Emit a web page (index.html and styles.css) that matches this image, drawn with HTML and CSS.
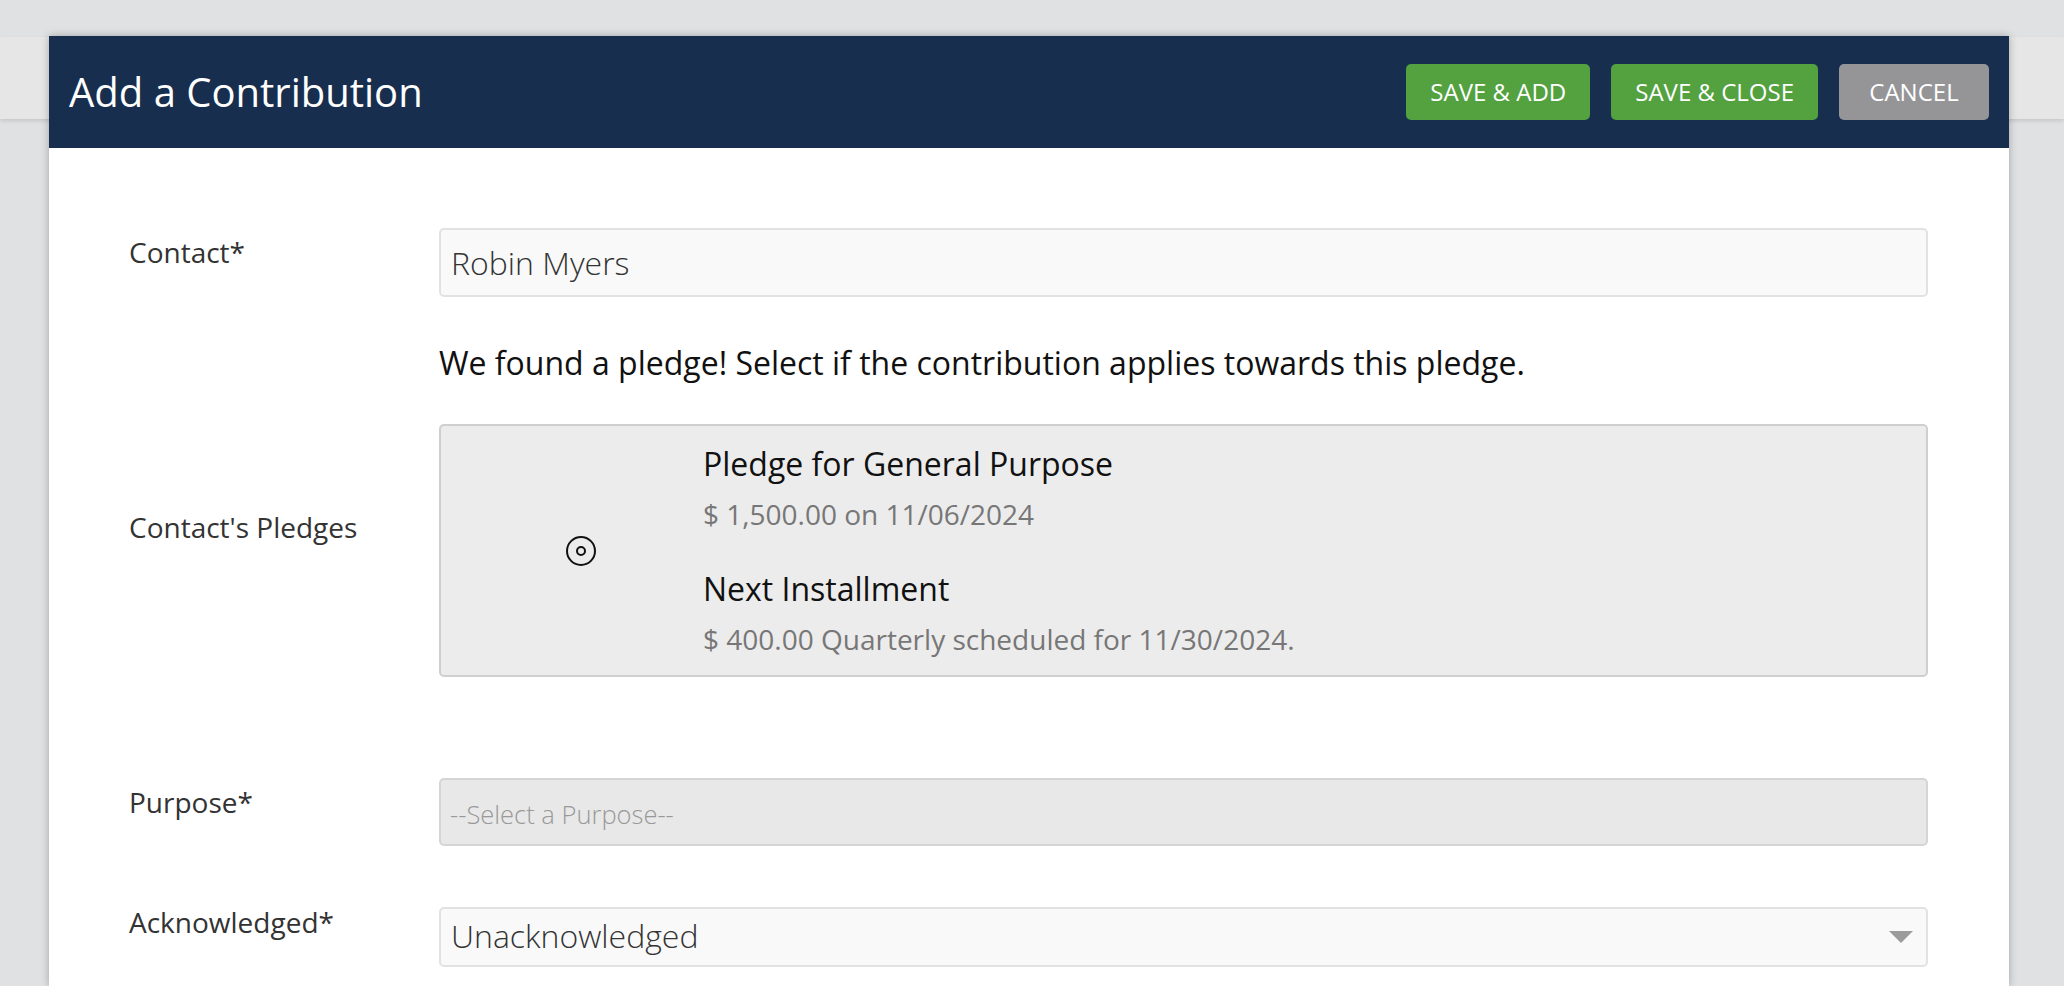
FILE: index.html
```html
<!DOCTYPE html>
<html lang="en">
<head>
<meta charset="utf-8">
<title>Add a Contribution</title>
<link rel="stylesheet" href="styles.css">
</head>
<body>
<div class="backdrop">
  <div class="backdrop-bar"></div>
</div>
<div class="modal">
  <header class="modal-header">
    <h1 class="modal-title">Add a Contribution</h1>
    <div class="actions">
      <button class="btn btn-green">SAVE &amp; ADD</button>
      <button class="btn btn-green">SAVE &amp; CLOSE</button>
      <button class="btn btn-gray">CANCEL</button>
    </div>
  </header>
  <div class="modal-body">
    <div class="form">
      <div class="row row-contact">
        <label class="label">Contact*</label>
        <div class="field field-input">Robin Myers</div>
      </div>
      <div class="row row-notice">
        <div></div>
        <p class="notice">We found a pledge! Select if the contribution applies towards this pledge.</p>
      </div>
      <div class="row row-pledges">
        <label class="label label-pledges">Contact's Pledges</label>
        <div class="pledge-box">
          <div class="radio-cell">
            <svg class="radio" width="30" height="30" viewBox="0 0 30 30"><circle cx="15" cy="15" r="14" fill="none" stroke="#111" stroke-width="2"/><circle cx="15" cy="15" r="4" fill="none" stroke="#111" stroke-width="2"/></svg>
          </div>
          <div class="pledge-info">
            <div class="pledge-title">Pledge for General Purpose</div>
            <div class="pledge-sub">$ 1,500.00 on 11/06/2024</div>
            <div class="pledge-title pledge-title-next">Next Installment</div>
            <div class="pledge-sub">$ 400.00 Quarterly scheduled for 11/30/2024.</div>
          </div>
        </div>
      </div>
      <div class="row row-purpose">
        <label class="label">Purpose*</label>
        <div class="field field-disabled">--Select a Purpose--</div>
      </div>
      <div class="row row-ack">
        <label class="label">Acknowledged*</label>
        <div class="field field-select">
          <span>Unacknowledged</span>
          <svg class="caret" width="24" height="12" viewBox="0 0 24 12"><polygon points="0,0 24,0 12,12" fill="#9b9b9b"/></svg>
        </div>
      </div>
    </div>
  </div>
</div>
</body>
</html>
```

FILE: styles.css
```css
* { box-sizing: border-box; }

html, body {
  margin: 0;
  height: 100%;
  overflow: hidden;
}

body {
  background: #e0e1e3;
  font-family: "Open Sans", "Liberation Sans", sans-serif;
  color: #333;
}

.backdrop {
  padding-top: 37px;
}

.backdrop-bar {
  height: 82px;
  background: #e6e6e7;
  box-shadow: 0 2px 4px rgba(0, 0, 0, 0.12);
}

.modal {
  position: absolute;
  left: 49px;
  top: 36px;
  width: 1960px;
  bottom: 0;
  background: #fff;
  box-shadow: 0 0 8px rgba(0, 0, 0, 0.28);
}

.modal-header {
  height: 112px;
  background: #172e4e;
  display: flex;
  align-items: center;
  justify-content: space-between;
  padding: 0 20px;
}

.modal-title {
  margin: 0;
  font-size: 40px;
  font-weight: 400;
  color: #fff;
  line-height: 1.2;
}

.actions {
  display: flex;
  gap: 21px;
}

.btn {
  height: 56px;
  padding: 0 24px;
  border: none;
  border-radius: 5px;
  font-family: "Open Sans", "Liberation Sans", sans-serif;
  font-size: 24px;
  color: #fff;
  line-height: 56px;
  text-align: center;
}

.btn-green { background: #53a13f; }
.btn-gray { background: #959598; min-width: 150px; }

.modal-body {
  padding: 80px 81px 0 80px;
}

.form {
  display: flex;
  flex-direction: column;
}

.row {
  display: grid;
  grid-template-columns: 310px 1fr;
  align-items: start;
}

.label {
  font-size: 28px;
  line-height: 40px;
  color: #333;
  margin-top: 4px;
}

.field {
  border: 2px solid #e2e2e2;
  border-radius: 5px;
  background: #f9f9f9;
  display: flex;
  align-items: center;
  font-weight: 300;
  color: #333;
}

.field-input {
  height: 69px;
  padding: 0 10px;
  font-size: 32px;
}

.row-notice { margin-top: 46px; }

.notice {
  margin: 0;
  font-size: 32px;
  line-height: 40px;
  color: #111;
}

.row-pledges { margin-top: 41px; }

.label-pledges { margin-top: 83px; }

.pledge-box {
  height: 253px;
  border: 2px solid #cfcfcf;
  border-radius: 5px;
  background: #ececec;
  display: flex;
  padding: 16px 0;
}

.radio-cell {
  width: 262px;
  display: flex;
  align-items: center;
  padding-left: 125px;
}

.radio { display: block; }

.pledge-info {
  display: flex;
  flex-direction: column;
}

.pledge-title {
  font-size: 32px;
  line-height: 44px;
  color: #111;
}

.pledge-title-next { margin-top: 33px; }

.pledge-sub {
  margin-top: 8px;
  font-size: 28px;
  line-height: 40px;
  color: #777;
}

.row-purpose { margin-top: 101px; }

.field-disabled {
  height: 68px;
  padding: 4px 9px 0;
  background: #e8e8e8;
  border-color: #d5d5d5;
  font-size: 25.5px;
  color: #999;
}

.row-ack { margin-top: 52px; }

.field-select {
  margin-top: 9px;
  height: 60px;
  padding: 0 13px 4px 10px;
  font-size: 32px;
  justify-content: space-between;
}

.caret { display: block; margin-top: 4px; }
```
